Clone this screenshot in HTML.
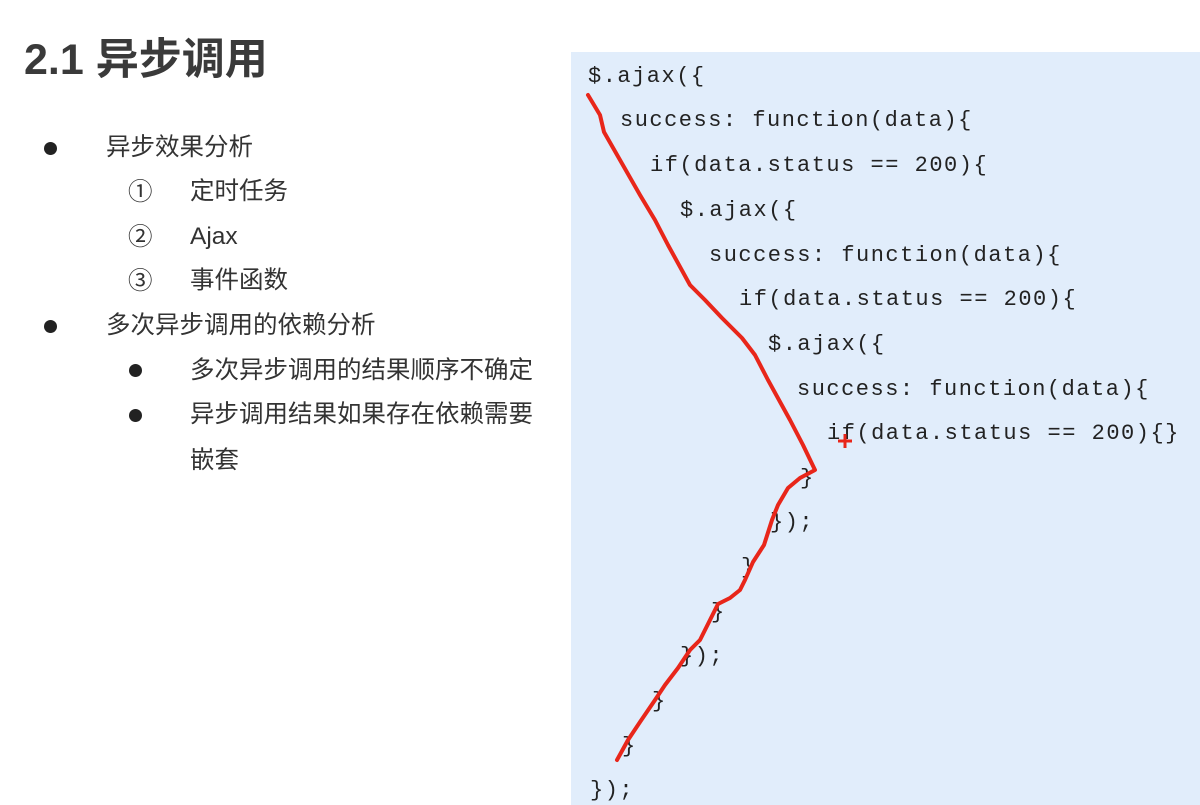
<!DOCTYPE html>
<html><head><meta charset="utf-8"><style>
body{margin:0;width:1200px;height:805px;background:#fff;position:relative;overflow:hidden;font-family:"Liberation Sans","Noto Sans CJK SC",sans-serif;color:#333}
.a{position:absolute;white-space:nowrap}
.t{font-size:24.5px;line-height:30px}
.dot{position:absolute;width:13px;height:13px;border-radius:50%;background:#222}
.code{position:absolute;left:571px;top:52px;width:629px;height:753px;background:#e1edfb}
.c{position:absolute;font-family:"Liberation Mono","Courier New",monospace;font-size:22px;letter-spacing:1.5px;color:#222;line-height:24px;white-space:pre}
</style></head><body>
<div class="a" style="left:24px;top:34px;font-size:43px;font-weight:bold;color:#3a3a3a;line-height:52px">2.1 异步调用</div>
<div class="dot" style="left:44px;top:142px"></div><div class="a t" style="left:106px;top:133px">异步效果分析</div>
<div class="a t" style="left:128px;top:178px">①</div><div class="a t" style="left:190px;top:177px">定时任务</div>
<div class="a t" style="left:128px;top:223px">②</div><div class="a t" style="left:190px;top:222px">Ajax</div>
<div class="a t" style="left:128px;top:267px">③</div><div class="a t" style="left:190px;top:266px">事件函数</div>
<div class="dot" style="left:44px;top:320px"></div><div class="a t" style="left:106px;top:311px">多次异步调用的依赖分析</div>
<div class="dot" style="left:129px;top:364px"></div><div class="a t" style="left:190px;top:356px">多次异步调用的结果顺序不确定</div>
<div class="dot" style="left:129px;top:409px"></div><div class="a t" style="left:190px;top:400px">异步调用结果如果存在依赖需要</div>
<div class="a t" style="left:190px;top:446px">嵌套</div>
<div class="code"></div>
<div class="c" style="left:588px;top:65px">$.ajax({</div>
<div class="c" style="left:620px;top:109px">success: function(data){</div>
<div class="c" style="left:650px;top:154px">if(data.status == 200){</div>
<div class="c" style="left:680px;top:199px">$.ajax({</div>
<div class="c" style="left:709px;top:244px">success: function(data){</div>
<div class="c" style="left:739px;top:288px">if(data.status == 200){</div>
<div class="c" style="left:768px;top:333px">$.ajax({</div>
<div class="c" style="left:797px;top:378px">success: function(data){</div>
<div class="c" style="left:827px;top:422px">if(data.status == 200){}</div>
<div class="c" style="left:800px;top:467px">}</div>
<div class="c" style="left:770px;top:511px">});</div>
<div class="c" style="left:741px;top:556px">}</div>
<div class="c" style="left:711px;top:601px">}</div>
<div class="c" style="left:680px;top:645px">});</div>
<div class="c" style="left:652px;top:690px">}</div>
<div class="c" style="left:622px;top:735px">}</div>
<div class="c" style="left:590px;top:779px">});</div>
<svg class="a" style="left:0;top:0" width="1200" height="805"><path d="M588 95 L600 115 L604 132 L620 160 L640 195 L655 220 L668 245 L690 285 L705 300 L722 318 L742 338 L755 355 L768 380 L790 420 L803 445 L815 470 L800 478 L788 488 L778 505 L772 520 L764 545 L753 562 L745 580 L740 590 L730 598 L718 604 L710 620 L700 640 L690 650 L678 668 L665 685 L655 700 L640 722 L628 740 L617 760" fill="none" stroke="#e8261a" stroke-width="4" stroke-linejoin="round" stroke-linecap="round"/><path d="M838 441 H852 M845 434 V448" stroke="#e8261a" stroke-width="3"/></svg>
</body></html>
